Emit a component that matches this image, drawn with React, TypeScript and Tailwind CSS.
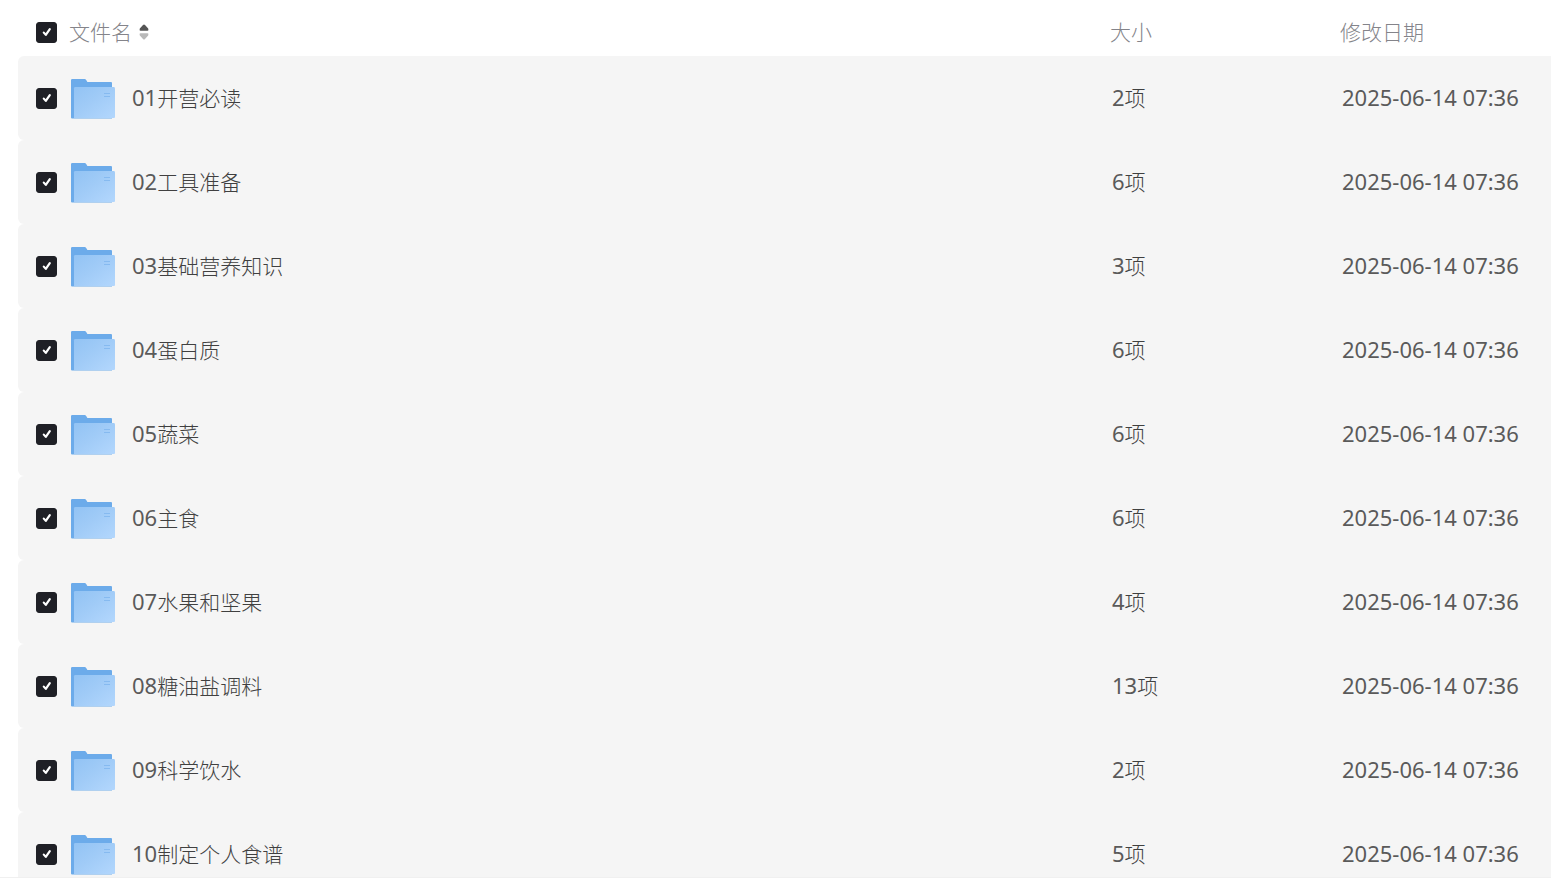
const files = [
  { no: "01", title: "开营必读", count: 2, date: "2025-06-14 07:36" },
  { no: "02", title: "工具准备", count: 6, date: "2025-06-14 07:36" },
  { no: "03", title: "基础营养知识", count: 3, date: "2025-06-14 07:36" },
  { no: "04", title: "蛋白质", count: 6, date: "2025-06-14 07:36" },
  { no: "05", title: "蔬菜", count: 6, date: "2025-06-14 07:36" },
  { no: "06", title: "主食", count: 6, date: "2025-06-14 07:36" },
  { no: "07", title: "水果和坚果", count: 4, date: "2025-06-14 07:36" },
  { no: "08", title: "糖油盐调料", count: 13, date: "2025-06-14 07:36" },
  { no: "09", title: "科学饮水", count: 2, date: "2025-06-14 07:36" },
  { no: "10", title: "制定个人食谱", count: 5, date: "2025-06-14 07:36" },
]

function Checkbox({ label }: { label: string }) {
  return (
    <span className="grid w-[21px] h-[21px] shrink-0">
      <input
        type="checkbox"
        defaultChecked
        aria-label={label}
        className="peer col-start-1 row-start-1 w-full h-full appearance-none rounded-[3px] border border-[#1f2026] checked:bg-[#1f2026]"
      />
      <svg
        viewBox="0 0 21 21"
        fill="none"
        className="col-start-1 row-start-1 w-full h-full pointer-events-none invisible peer-checked:visible"
      >
        <path d="M7.8 10.6 L9.8 12.9 L13.8 7.2" stroke="#fff" strokeWidth="2.2" strokeLinecap="round" strokeLinejoin="round" />
      </svg>
    </span>
  )
}

function FolderIcon() {
  return (
    <svg viewBox="0 -2 44 42" className="w-11 h-[42px] shrink-0" aria-hidden="true">
      <defs>
        <linearGradient id="folder-front" x1="0" y1="0" x2="1" y2="1">
          <stop offset="0" stopColor="#92c3f4" />
          <stop offset="0.45" stopColor="#a0cbf7" />
          <stop offset="1" stopColor="#b3d7fd" />
        </linearGradient>
      </defs>
      <path d="M0 1.2 Q0 0 1.2 0 H13.6 Q14.6 0 15.2 0.9 L16.4 3 H40 Q41 3 41 4 V39.5 H1 Q0 39.5 0 38.5 Z" fill="#6cabea" />
      <path d="M3 9.2 Q3 8 4.2 8 H42.6 Q44 8 44 9.4 V38 Q44 39 43 39 H3 Z" fill="url(#folder-front)" />
      <path d="M33 14.5 H39 M33 17.5 H39" stroke="#86baf0" strokeWidth="1" />
    </svg>
  )
}

function SortIcon() {
  return (
    <svg viewBox="0 0 10 16" className="w-[10px] h-4" aria-hidden="true">
      <path d="M5 0.5 Q5.5 0.5 6 1.1 L9.2 4.6 Q10 6.8 8.6 6.8 H1.4 Q0 6.8 0.8 4.6 L4 1.1 Q4.5 0.5 5 0.5 Z" fill="#555" />
      <path d="M5 15.5 Q5.5 15.5 6 14.9 L9.2 11.4 Q10 9.2 8.6 9.2 H1.4 Q0 9.2 0.8 11.4 L4 14.9 Q4.5 15.5 5 15.5 Z" fill="#b9b9b9" />
    </svg>
  )
}

// digits are a touch larger and heavier than the Chinese text beside them
function Num({ children }: { children: React.ReactNode }) {
  return <span className="text-[22px] leading-none font-normal text-[#5a5a5a]">{children}</span>
}

export default function App() {
  return (
    <div className="flex h-screen flex-col bg-white pb-[7px] font-['Noto_Sans','Noto_Sans_CJK_SC',sans-serif] text-[21px] leading-8">
      <main className="min-h-0 flex-1 overflow-hidden border-b border-[#f0f0f0] pl-[18px]">
        <table className="w-full table-fixed border-separate border-spacing-0 text-left">
          <colgroup>
            <col />
            <col className="w-[230px]" />
            <col className="w-[212px]" />
          </colgroup>
          <thead className="text-[#84848a]">
            <tr className="h-14">
              <th className="p-0 pl-[18px] pt-2 font-light">
                <div className="flex items-center gap-3">
                  <Checkbox label="全选" />
                  <button type="button" className="flex items-center gap-[7px] font-light">
                    文件名
                    <SortIcon />
                  </button>
                </div>
              </th>
              <th className="p-0 pl-px pt-2 font-light">大小</th>
              <th className="p-0 pl-px pt-2 font-light">修改日期</th>
            </tr>
          </thead>
          <tbody className="font-light text-[#404040]">
            {files.map((file) => (
              <tr key={file.no} className="h-[84px]">
                <td className="rounded-l-md bg-[#f5f5f5] p-0 pl-[18px]">
                  <div className="flex items-center">
                    <Checkbox label={file.no + file.title} />
                    <span className="ml-3.5">
                      <FolderIcon />
                    </span>
                    <a href="#" className="ml-[17px] truncate">
                      <Num>{file.no}</Num>
                      {file.title}
                    </a>
                  </div>
                </td>
                <td className="bg-[#f5f5f5] p-0 pl-[3px]">
                  <Num>{file.count}</Num>项
                </td>
                <td className="bg-[#f5f5f5] p-0 pl-[3px] whitespace-nowrap">
                  <Num>{file.date}</Num>
                </td>
              </tr>
            ))}
          </tbody>
        </table>
      </main>
    </div>
  )
}
